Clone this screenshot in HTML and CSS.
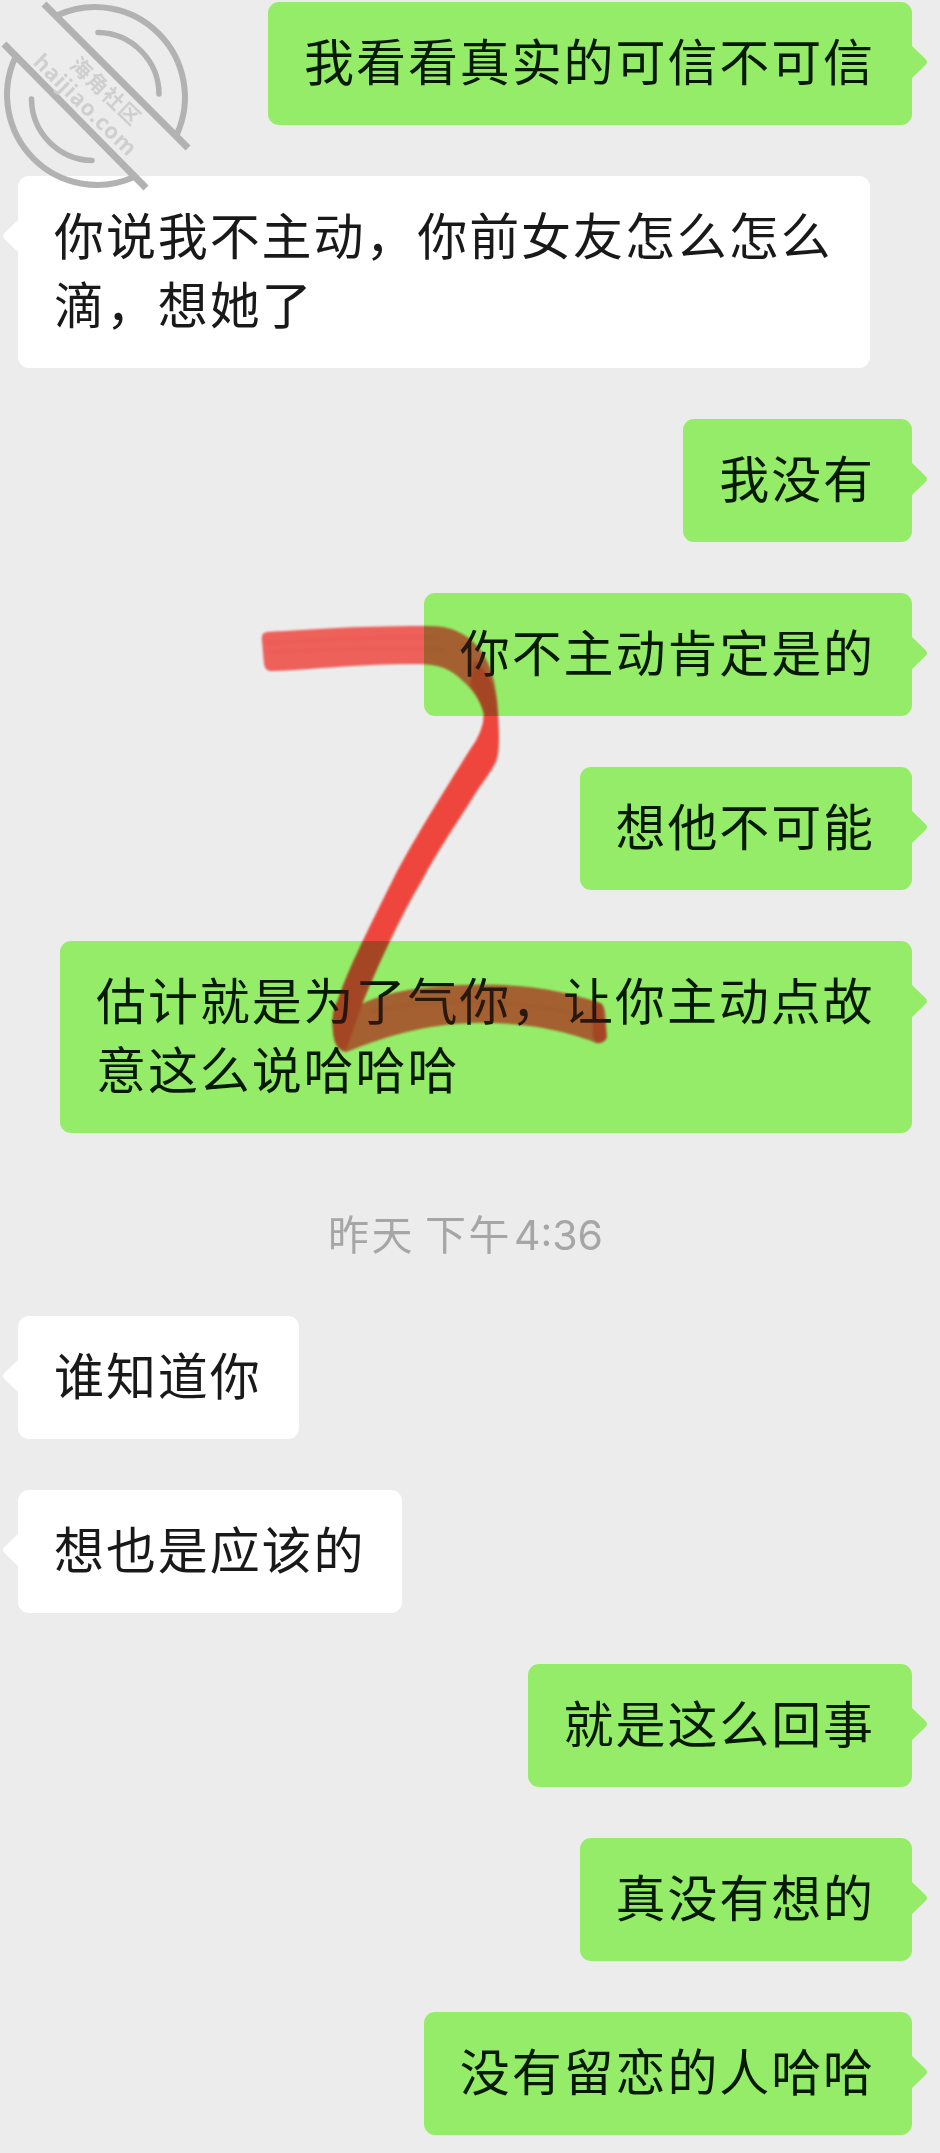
FILE: index.html
```html
<!DOCTYPE html>
<html lang="zh-CN">
<head>
    <meta charset="UTF-8">
    <meta name="viewport" content="width=device-width, initial-scale=1.0">
    <title>聊天记录</title>
    <link rel="stylesheet" href="styles.css">
</head>
<body>
    <svg class="defs" width="0" height="0">
        <symbol id="tail" viewBox="0 0 16 34">
            <path d="M0 1L13.5 14Q16.5 17 13.5 20L0 33Z"/>
        </symbol>
    </svg>

    <div class="chat">
        <div class="message sent">
            <div class="bubble">我看看真实的可信不可信<svg class="tail"><use href="#tail"/></svg></div>
        </div>
        <div class="message received">
            <div class="bubble">你说我不主动，你前女友怎么怎么滴，想她了<svg class="tail"><use href="#tail"/></svg></div>
        </div>
        <div class="message sent">
            <div class="bubble">我没有<svg class="tail"><use href="#tail"/></svg></div>
        </div>
        <div class="message sent">
            <div class="bubble">你不主动肯定是的<svg class="tail"><use href="#tail"/></svg></div>
        </div>
        <div class="message sent">
            <div class="bubble">想他不可能<svg class="tail"><use href="#tail"/></svg></div>
        </div>
        <div class="message sent">
            <div class="bubble">估计就是为了气你，让你主动点故意这么说哈哈哈<svg class="tail"><use href="#tail"/></svg></div>
        </div>

        <div class="time"><span class="day">昨天</span><span class="period">下午</span><span class="clock">4:36</span></div>

        <div class="message received">
            <div class="bubble">谁知道你<svg class="tail"><use href="#tail"/></svg></div>
        </div>
        <div class="message received">
            <div class="bubble">想也是应该的<svg class="tail"><use href="#tail"/></svg></div>
        </div>
        <div class="message sent">
            <div class="bubble">就是这么回事<svg class="tail"><use href="#tail"/></svg></div>
        </div>
        <div class="message sent">
            <div class="bubble">真没有想的<svg class="tail"><use href="#tail"/></svg></div>
        </div>
        <div class="message sent">
            <div class="bubble">没有留恋的人哈哈<svg class="tail"><use href="#tail"/></svg></div>
        </div>

        <!-- red marker -->
        <svg class="marker" width="360" height="440" viewBox="255 620 360 440">
            <path id="stroke" class="marker-wide" d="M262 640Q261 632 268 632C310 630 350 626 425 626C445 626 455 629 467 637C486 651 494 672 497 700C499 722 500 750 496 761C492 771 482 782 473 797C454 827 438 850 422 880C400 917 378 962 362 1004C395 988 445 984 500 985C542 986 580 996 600 1003Q604 1005 605 1012L607 1037Q605 1044 596 1043L592 1041C568 1032 530 1023 490 1023C430 1021 382 1038 346 1052Q334 1050 333 1030Q331 1012 338 1000C347 972 370 926 393 880C410 846 445 790 470 750Q484 731 484 714C480 698 469 684 452 672C441 665 430 664 415 664C350 664 310 670 271 671Q265 671 264 663Z"/>
            <path class="marker-dense" d="M474 660Q494 675 497 708C499 735 500 750 496 761C490 774 480 785 473 797C454 827 438 850 422 880C398 920 372 980 362 1004C355 1025 351 1036 346 1050Q334 1050 333 1030Q331 1012 338 1000C347 972 370 926 393 880C410 846 445 790 470 750Q484 731 484 714Q480 698 470 685Z"/>
            <path class="marker-dense" d="M592 1001L602 1004L606 1036Q605 1043 596 1042L593 1037Z"/>
            <path class="marker-streak" d="M266 643C320 640 370 636 440 638M268 652C330 650 380 646 445 650M372 1012C430 997 530 998 595 1020"/>
        </svg>
        <svg class="marker-tint" width="360" height="440" viewBox="255 620 360 440">
            <use href="#stroke"/>
        </svg>

        <!-- site watermark -->
        <svg class="watermark" width="200" height="200" viewBox="0 0 200 200">
            <g class="watermark-lines">
                <path class="ring" d="M58 15A90 90 0 0 1 177 134M15 58A90 90 0 0 0 134 177"/>
                <path class="bar" d="M44 4L188 148M4 44L146 188"/>
                <path class="arc" d="M98 32.5A62 62 0 0 1 159 94M31.5 99A62 62 0 0 0 92 160.500"/>
            </g>
            <text class="watermark-name" transform="translate(106 91) rotate(43.5)" y="8">海角社区</text>
            <text class="watermark-site" transform="translate(84 106) rotate(44.5)" y="6" textLength="134">haijiao.com</text>
        </svg>
    </div>
</body>
</html>
```

FILE: styles.css
```css
* {
    box-sizing: border-box;
}

body {
    margin: 0;
    background-color: #ececec;
    font-family: "Noto Sans CJK SC", sans-serif;
    color: #191919;
}

.defs {
    display: block;
}

.chat {
    position: relative;
    height: 2153px;
    padding: 2px 28px 18px 18px;
    overflow: hidden;
}

.message {
    display: flex;
    margin-bottom: 51px;
}

.sent {
    justify-content: flex-end;
}

.bubble {
    position: relative;
    max-width: 852px;
    padding: 23px 37px 31px 36px;
    border-radius: 11px;
    background-color: #fff;
    font-size: 50px;
    line-height: 69px;
    letter-spacing: 1.9px;
}

.sent .bubble {
    background-color: #95ec69;
    color: #061a00;
}

.tail {
    position: absolute;
    top: 43px;
    width: 16px;
    height: 34px;
    fill: #fff;
}

.sent .tail {
    left: 100%;
    fill: #95ec69;
}

.received .tail {
    right: 100%;
    transform: scaleX(-1);
}

.time {
    display: flex;
    justify-content: center;
    align-items: baseline;
    height: 60px;
    margin: 72px 0 51px;
    padding-left: 1px;
    font-size: 41px;
    line-height: 55px;
    color: #a6a6a6;
}

.day,
.period {
    letter-spacing: 2.5px;
}

.day {
    margin-right: 10px;
}

.clock {
    margin-left: 2px;
    font-family: Inter, sans-serif;
}

.marker,
.marker-tint {
    position: absolute;
    left: 255px;
    top: 620px;
    filter: blur(0.8px);
}

.marker {
    mix-blend-mode: multiply;
}

.marker-tint {
    opacity: 0.14;
}

.marker-wide {
    fill: #ff6660;
}

.marker-dense {
    fill: #ff3e32;
    opacity: 0.8;
}

.marker-streak {
    fill: none;
    stroke: #f05a50;
    stroke-width: 4;
    opacity: 0.25;
}

.watermark {
    position: absolute;
    left: 0;
    top: 0;
}

.watermark-lines {
    fill: none;
    stroke: #b2b2b2;
}

.ring {
    stroke-width: 6;
}

.bar {
    stroke-width: 7;
}

.arc {
    stroke-width: 5.5px;
    stroke-linecap: round;
}

.watermark-name,
.watermark-site {
    fill: #cfcfcf;
    text-anchor: middle;
    font-weight: 700;
}

.watermark-name {
    font-size: 21px;
    letter-spacing: 1px;
}

.watermark-site {
    font-family: "Open Sans", sans-serif;
    font-size: 22px;
}
```
